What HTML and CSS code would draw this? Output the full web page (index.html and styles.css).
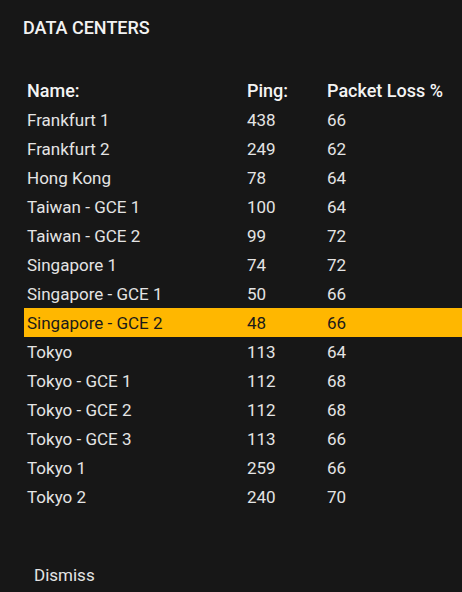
FILE: index.html
```html
<!DOCTYPE html>
<html lang="en">

<head>
    <meta charset="UTF-8">
    <meta name="viewport" content="width=device-width, initial-scale=1.0">
    <title>Data Centers</title>
    <link rel="stylesheet" href="styles.css">
</head>

<body>

    <div class="panel">
        <h1 class="title">DATA CENTERS</h1>

        <div class="table">
            <div class="row head">
                <span>Name:</span><span>Ping:</span><span>Packet Loss %</span>
            </div>
            <div class="row"><span>Frankfurt 1</span><span>438</span><span>66</span></div>
            <div class="row"><span>Frankfurt 2</span><span>249</span><span>62</span></div>
            <div class="row"><span>Hong Kong</span><span>78</span><span>64</span></div>
            <div class="row"><span>Taiwan - GCE 1</span><span>100</span><span>64</span></div>
            <div class="row"><span>Taiwan - GCE 2</span><span>99</span><span>72</span></div>
            <div class="row"><span>Singapore 1</span><span>74</span><span>72</span></div>
            <div class="row"><span>Singapore - GCE 1</span><span>50</span><span>66</span></div>
            <div class="row selected"><span>Singapore - GCE 2</span><span>48</span><span>66</span></div>
            <div class="row"><span>Tokyo</span><span>113</span><span>64</span></div>
            <div class="row"><span>Tokyo - GCE 1</span><span>112</span><span>68</span></div>
            <div class="row"><span>Tokyo - GCE 2</span><span>112</span><span>68</span></div>
            <div class="row"><span>Tokyo - GCE 3</span><span>113</span><span>66</span></div>
            <div class="row"><span>Tokyo 1</span><span>259</span><span>66</span></div>
            <div class="row"><span>Tokyo 2</span><span>240</span><span>70</span></div>
        </div>

        <button class="dismiss">Dismiss</button>
    </div>

</body>

</html>
```

FILE: styles.css
```css
body {
    margin: 0;
    padding: 0;
    background-color: #171717;
    font-family: Roboto, "Liberation Sans", sans-serif;
    color: #e4e4e4;
    height: 592px;
    overflow: hidden;
}

.panel {
    padding: 17px 0 0 24px;
}

.title {
    margin: 0 0 0 -1px;
    font-size: 18px;
    font-weight: 500;
    line-height: 22px;
    color: #f2f2f2;
}

.table {
    margin-top: 37px;
}

.row {
    display: grid;
    grid-template-columns: 220px 80px 1fr;
    height: 29px;
    align-items: center;
    padding-left: 3px;
    font-size: 17px;
}

.row.head {
    color: #f4f4f4;
    font-size: 18px;
    font-weight: 500;
}

.row.selected {
    background-color: #ffb700;
    color: #1a1a1a;
}

.dismiss {
    margin: 54px 0 0 10px;
    padding: 0;
    border: none;
    background: none;
    font-family: inherit;
    font-size: 17px;
    color: #e4e4e4;
}
```
